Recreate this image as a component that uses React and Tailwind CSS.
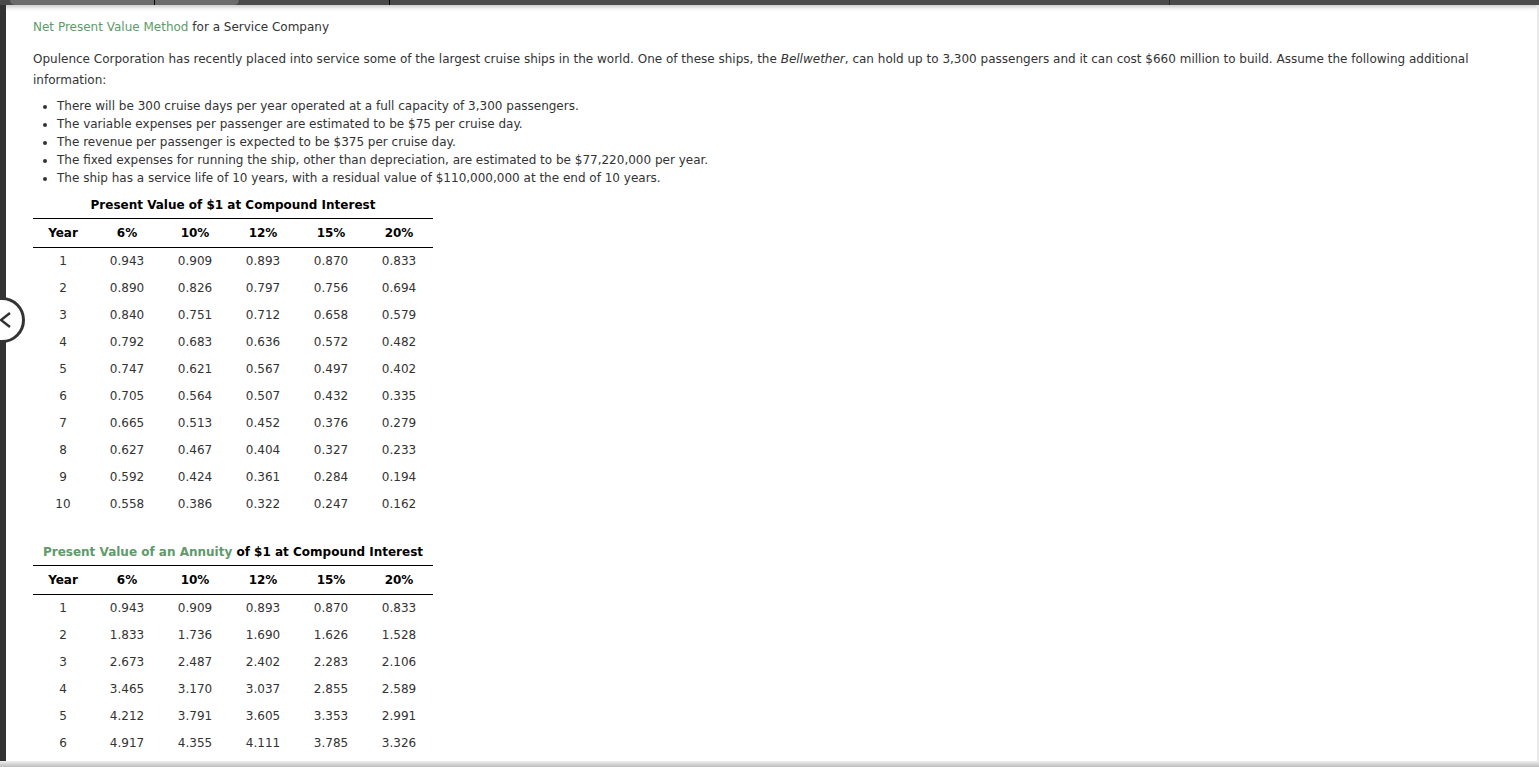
import React from "react";

const pv = [
  [1, "0.943", "0.909", "0.893", "0.870", "0.833"],
  [2, "0.890", "0.826", "0.797", "0.756", "0.694"],
  [3, "0.840", "0.751", "0.712", "0.658", "0.579"],
  [4, "0.792", "0.683", "0.636", "0.572", "0.482"],
  [5, "0.747", "0.621", "0.567", "0.497", "0.402"],
  [6, "0.705", "0.564", "0.507", "0.432", "0.335"],
  [7, "0.665", "0.513", "0.452", "0.376", "0.279"],
  [8, "0.627", "0.467", "0.404", "0.327", "0.233"],
  [9, "0.592", "0.424", "0.361", "0.284", "0.194"],
  [10, "0.558", "0.386", "0.322", "0.247", "0.162"],
];

const annuity = [
  [1, "0.943", "0.909", "0.893", "0.870", "0.833"],
  [2, "1.833", "1.736", "1.690", "1.626", "1.528"],
  [3, "2.673", "2.487", "2.402", "2.283", "2.106"],
  [4, "3.465", "3.170", "3.037", "2.855", "2.589"],
  [5, "4.212", "3.791", "3.605", "3.353", "2.991"],
  [6, "4.917", "4.355", "4.111", "3.785", "3.326"],
];

const heads = ["Year", "6%", "10%", "12%", "15%", "20%"];

function RateTable({ caption, rows }) {
  return (
    <div className="w-[400px]">
      <div className="text-center font-bold text-black h-[22px] leading-[18px] whitespace-nowrap">{caption}</div>
      <table className="w-full border-collapse">
        <thead>
          <tr className="border-t border-b border-black h-[29px]">
            {heads.map((h, i) => (
              <th key={h} className={`font-bold text-black ${i === 0 ? "w-[60px]" : "w-[68px]"}`}>
                {h}
              </th>
            ))}
          </tr>
        </thead>
        <tbody>
          {rows.map((r) => (
            <tr key={r[0]} className="h-[27px]">
              {r.map((c, i) => (
                <td key={i} className="text-center">{c}</td>
              ))}
            </tr>
          ))}
        </tbody>
      </table>
    </div>
  );
}

export default function App() {
  return (
    <div className="h-screen overflow-hidden bg-white relative text-[12px] text-[#333]" style={{ fontFamily: '"DejaVu Sans", Verdana, sans-serif' }}>
      {/* top bar */}
      <div className="h-[5px] bg-[#4a4a4a] flex shadow-[0_2px_4px_rgba(0,0,0,0.25)]">
        <div className="ml-[10px] w-[230px] h-[5px] bg-[#6b6b6b] rounded-b-md border-r border-black/40 flex">
          <div className="w-[145px] h-full border-r border-black"></div>
        </div>
        <div className="w-[150px] h-full border-r border-black"></div>
        <div className="w-[780px] h-full border-r border-[#2a2a2a]"></div>
      </div>

      <div className="flex">
        <div className="w-[6px] h-[767px] bg-[#333] shrink-0"></div>
        <div className="flex-1 pl-[27px] pr-[36px] pt-[13px]">
          <div className="leading-[18px]">
            <span className="text-[#5e9a6a]">Net Present Value Method</span> for a Service Company
          </div>
          <p className="mt-[13px] leading-[21px]">
            Opulence Corporation has recently placed into service some of the largest cruise ships in the world. One of these ships, the <i>Bellwether</i>, can hold up to 3,300 passengers and it can cost $660 million to build. Assume the following additional information:
          </p>
          <ul className="list-disc pl-[24px] mt-[6px] leading-[18px]">
            <li>There will be 300 cruise days per year operated at a full capacity of 3,300 passengers.</li>
            <li>The variable expenses per passenger are estimated to be $75 per cruise day.</li>
            <li>The revenue per passenger is expected to be $375 per cruise day.</li>
            <li>The fixed expenses for running the ship, other than depreciation, are estimated to be $77,220,000 per year.</li>
            <li>The ship has a service life of 10 years, with a residual value of $110,000,000 at the end of 10 years.</li>
          </ul>
          <div className="mt-[9px]">
            <RateTable caption="Present Value of $1 at Compound Interest" rows={pv} />
          </div>
          <div className="mt-[25px]">
            <RateTable
              caption={
                <>
                  <span className="text-[#5e9a6a]">Present Value of an Annuity</span> of $1 at Compound Interest
                </>
              }
              rows={annuity}
            />
          </div>
        </div>
      </div>

      {/* back chevron */}
      <div className="absolute left-[-21px] top-[297px] w-[46px] h-[46px] rounded-full bg-white border-[3px] border-[#333] flex items-center justify-end pr-[10px]">
        <svg width="14" height="18" viewBox="0 0 14 18" fill="none" stroke="#333" strokeWidth="2.5">
          <path d="M12 2 L3 9 L12 16" />
        </svg>
      </div>

      {/* right edge */}
      <div className="absolute right-0 top-[5px] bottom-0 w-[2px] bg-[#e8e8e8]"></div>
      {/* bottom shade */}
      <div className="absolute left-0 right-0 bottom-0 h-[6px] bg-gradient-to-b from-[#f0f0f0] to-[#bdbdbd]"></div>
    </div>
  );
}
